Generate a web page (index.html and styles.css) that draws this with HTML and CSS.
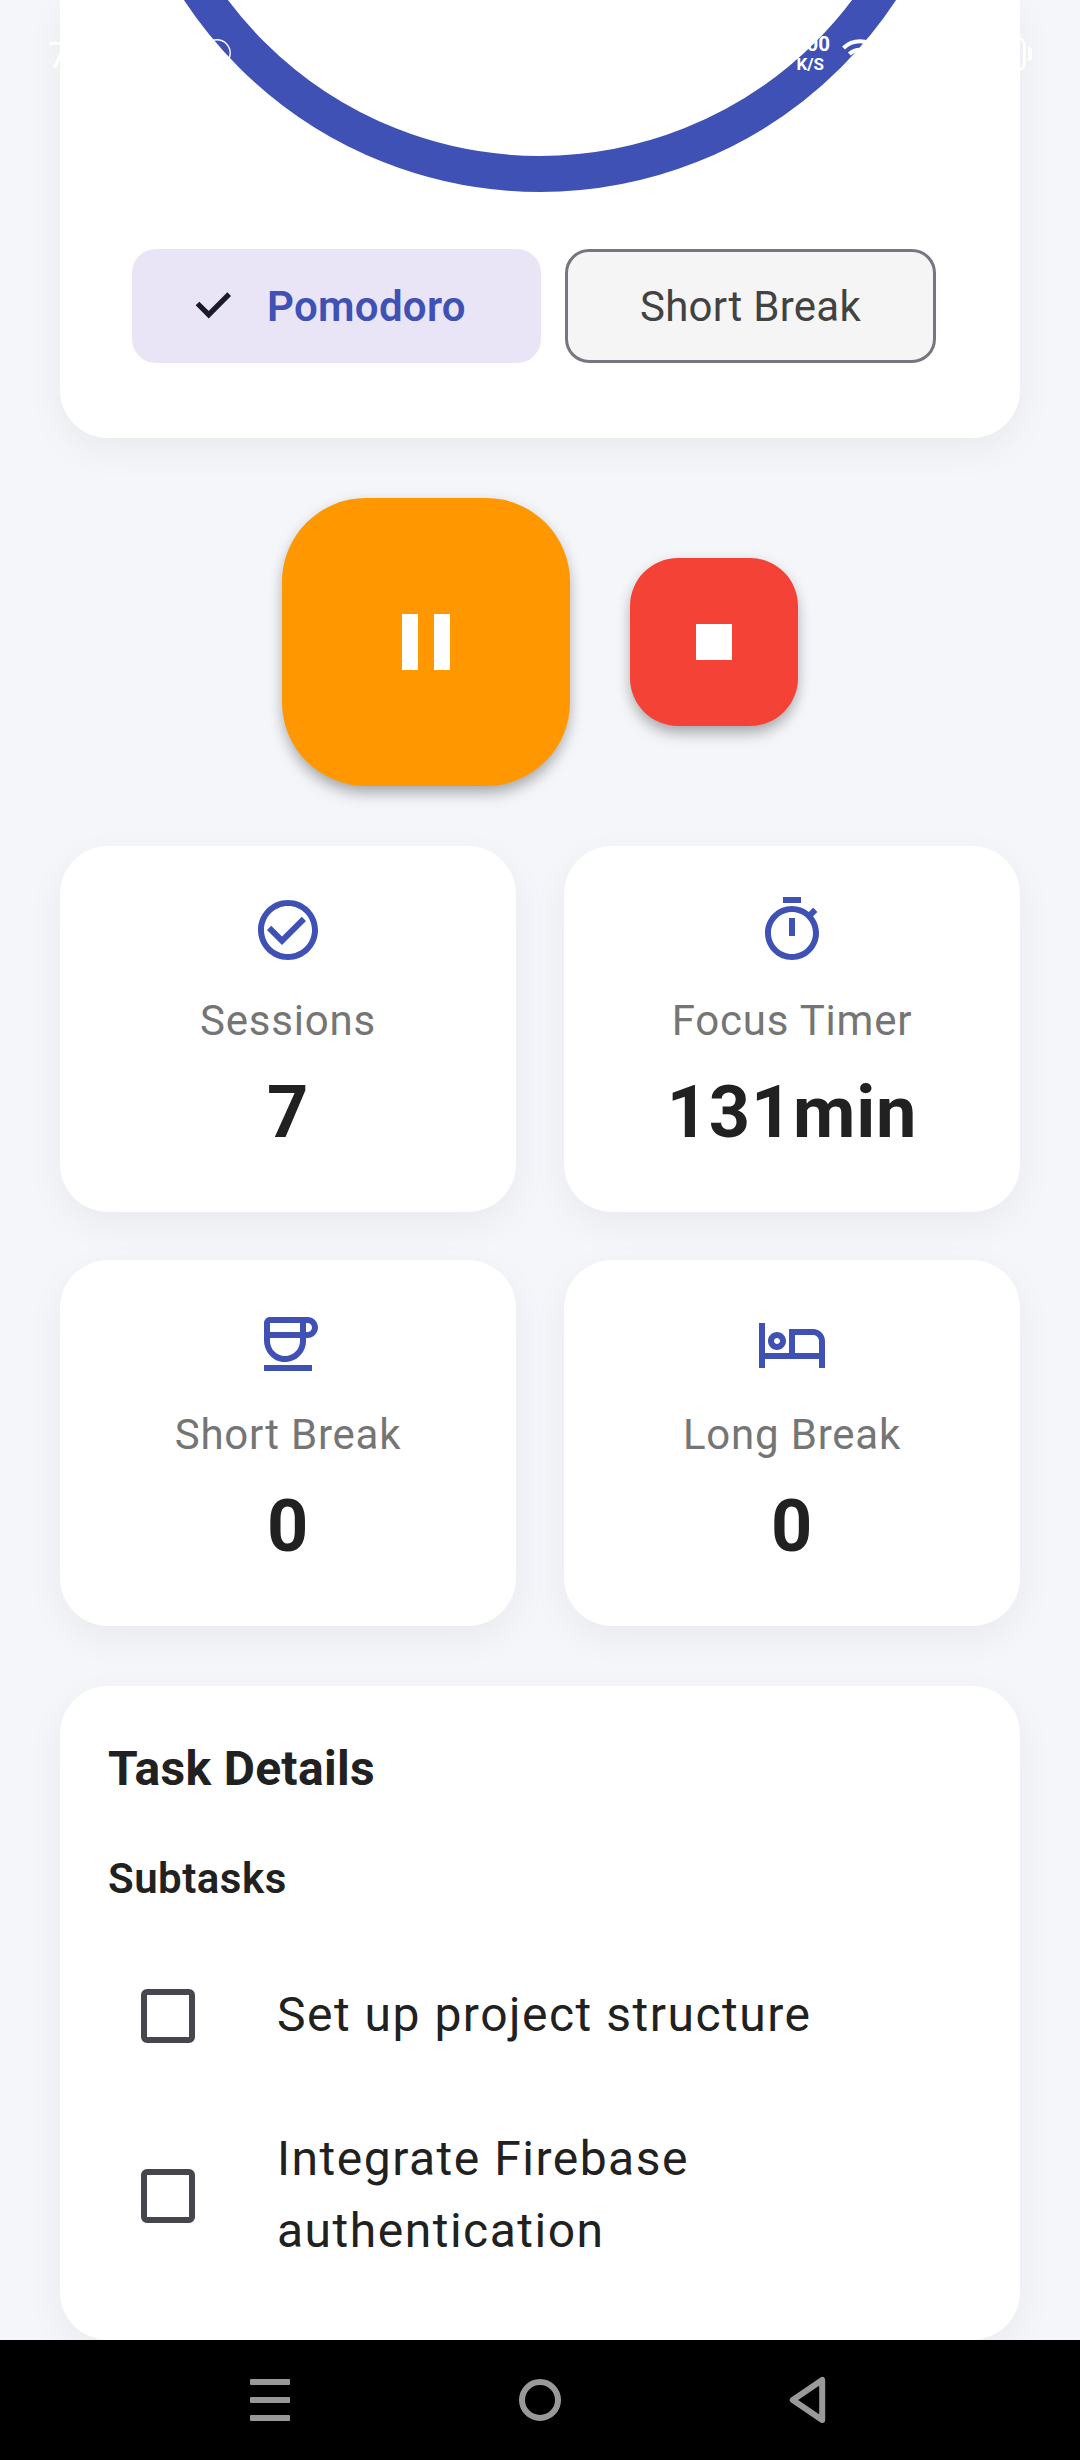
FILE: index.html
```html
<!DOCTYPE html>
<html lang="en">
<head>
<meta charset="utf-8">
<title>Pomodoro</title>
<link rel="stylesheet" href="styles.css">
</head>
<body>
<div class="screen">
  <main class="content">
    <section class="card timer">
      <svg class="ring" viewBox="0 0 852 852"><circle cx="426" cy="426" r="408"/></svg>
      <div class="chips">
        <button class="chip chip-on">
          <svg class="chip-check" viewBox="0 0 36 28"><path d="M2.5 11.5 13.7 22.7 34.2 2.2"/></svg>
          <span>Pomodoro</span>
        </button>
        <button class="chip chip-off"><span>Short Break</span></button>
      </div>
    </section>

    <div class="controls">
      <button class="fab pause" aria-label="Pause"><svg viewBox="0 0 48 56"><path d="M0 0h16v56H0zM32 0h16v56H32z"/></svg></button>
      <button class="fab stop" aria-label="Stop"><svg viewBox="0 0 36 36"><path d="M0 0h36v36H0z"/></svg></button>
    </div>

    <section class="stats">
      <div class="card stat">
        <svg class="icon" viewBox="0 0 24 24"><path d="M16.59 7.58 10 14.17l-3.59-3.58L5 12l5 5 8-8zM12 2C6.48 2 2 6.48 2 12s4.48 10 10 10 10-4.48 10-10S17.52 2 12 2zm0 18c-4.42 0-8-3.58-8-8s3.58-8 8-8 8 3.58 8 8-3.58 8-8 8z"/></svg>
        <div class="label">Sessions</div>
        <div class="value">7</div>
      </div>
      <div class="card stat">
        <svg class="icon" viewBox="0 0 24 24"><path d="M15 1H9v2h6V1zm-4 13h2V8h-2v6zm8.03-6.61 1.42-1.42c-.43-.51-.9-.99-1.41-1.41l-1.42 1.42C16.07 4.74 14.12 4 12 4c-4.97 0-9 4.03-9 9s4.02 9 9 9 9-4.03 9-9c0-2.12-.74-4.07-1.97-5.61zM12 20c-3.87 0-7-3.13-7-7s3.13-7 7-7 7 3.13 7 7-3.13 7-7 7z"/></svg>
        <div class="label">Focus Timer</div>
        <div class="value">131min</div>
      </div>
      <div class="card stat">
        <svg class="icon" viewBox="0 0 24 24"><path d="M18.5 3H6C4.9 3 4 3.9 4 5v5.71c0 3.83 2.95 7.18 6.78 7.29 3.96.12 7.22-3.06 7.22-7v-1h.5c1.93 0 3.5-1.57 3.5-3.5S20.43 3 18.5 3zM16 5v3H6V5h10zm0 5v1c0 2.76-2.24 5-5 5s-5-2.24-5-5v-1h10zM18.5 8H18V5h.5c.83 0 1.5.67 1.5 1.5S19.33 8 18.5 8zM4 19h16v2H4v-2z"/></svg>
        <div class="label">Short Break</div>
        <div class="value">0</div>
      </div>
      <div class="card stat">
        <svg class="icon" viewBox="0 0 24 24"><path d="M7 14c1.66 0 3-1.34 3-3S8.66 8 7 8s-3 1.34-3 3 1.34 3 3 3zm0-4c.55 0 1 .45 1 1s-.45 1-1 1-1-.45-1-1 .45-1 1-1zm12-3h-8v8H3V5H1v15h2v-3h18v3h2v-9c0-2.21-1.79-4-4-4zm2 8h-8V9h6c1.1 0 2 .9 2 2v4z"/></svg>
        <div class="label">Long Break</div>
        <div class="value">0</div>
      </div>
    </section>

    <section class="card details">
      <h2>Task Details</h2>
      <h3>Subtasks</h3>
      <div class="task"><span class="box"></span><span class="task-text">Set up project structure</span></div>
      <div class="task task-tall"><span class="box"></span><span class="task-text">Integrate Firebase authentication</span></div>
    </section>
  </main>

  <header class="statusbar">
    <span class="clock">7</span>
    <svg class="ball" viewBox="0 0 28 28"><circle cx="14" cy="14" r="13.2"/></svg>
    <div class="speed"><span>5.00</span><span class="unit">K/S</span></div>
    <svg class="wifi" viewBox="0 0 36 30"><path d="M1.5 11a23.5 23.5 0 0 1 33 0M7.3 17a15.3 15.3 0 0 1 21.4 0"/></svg>
    <svg class="battery" viewBox="0 0 60 34"><rect x="1.3" y="1.3" width="51" height="31.4" rx="6"/><path d="M56 10q4 0 4 3v8q0 3-4 3z"/></svg>
  </header>

  <nav class="navbar">
    <svg viewBox="0 0 60 60"><path class="solid" d="M11 9h38q1 0 1 1v4q0 1-1 1H11q-1 0-1-1v-4q0-1 1-1zM11 27h38q1 0 1 1v4q0 1-1 1H11q-1 0-1-1v-4q0-1 1-1zM11 45h38q1 0 1 1v4q0 1-1 1H11q-1 0-1-1v-4q0-1 1-1z"/></svg>
    <svg viewBox="0 0 60 60"><circle cx="30" cy="30" r="18"/></svg>
    <svg viewBox="0 0 60 60"><path d="M12.8 30 42.2 10v40z"/></svg>
  </nav>
</div>
</body>
</html>
```
FILE: styles.css
```css
* { box-sizing: border-box; }
body { margin: 0; font-family: Roboto, sans-serif; }
button { font: inherit; border: 0; padding: 0; margin: 0; }
svg { display: block; flex: none; }

.screen {
  position: relative;
  width: 1080px;
  height: 2460px;
  overflow: hidden;
  background: #f4f6fa;
  display: flex;
  flex-direction: column;
}
.content { height: 2340px; flex: none; padding: 0 60px; overflow: hidden; }
.card {
  background: #fff;
  border-radius: 48px;
  box-shadow: 0 12px 37px rgba(0, 0, 0, .05);
}

.timer {
  height: 438px;
  border-radius: 0 0 48px 48px;
  display: flex;
  flex-direction: column;
  justify-content: flex-end;
  align-items: center;
  padding-bottom: 75px;
}
.ring { width: 852px; height: 852px; margin-bottom: 57px; fill: none; stroke: #3f51b5; stroke-width: 36; }
.chips { display: flex; gap: 24px; width: 816px; }
.chip { height: 114px; border-radius: 24px; font-size: 42px; letter-spacing: .3px; display: flex; align-items: center; }
.chip-on { width: 409px; padding-left: 63px; gap: 36px; background: #e9e5f7; color: #3f51b5; font-weight: 600; }
.chip-check { width: 36px; height: 28px; fill: none; stroke: #191a2c; stroke-width: 5.2; }
.chip-off { width: 371px; justify-content: center; background: #f5f5f5; border: 3px solid #777680; color: #424242; }

.controls { display: flex; justify-content: center; align-items: center; gap: 60px; padding: 60px 0; }
.fab { display: flex; align-items: center; justify-content: center; box-shadow: 0 10px 16px -3px rgba(0, 0, 0, .26), 0 3px 14px rgba(0, 0, 0, .12); }
.fab svg { fill: #fff; }
.pause { width: 288px; height: 288px; border-radius: 84px; background: #ff9800; }
.pause svg { width: 48px; height: 56px; }
.stop { width: 168px; height: 168px; border-radius: 48px; background: #f44336; }
.stop svg { width: 36px; height: 36px; }

.stats { display: grid; grid-template-columns: 456px 456px; gap: 48px; }
.stat { height: 366px; padding: 48px; display: flex; flex-direction: column; align-items: center; }
.icon { width: 72px; height: 72px; fill: #3f51b5; }
.label { margin-top: 25px; font-size: 42px; line-height: 60px; letter-spacing: .8px; color: #757575; }
.value { margin-top: 11px; font-size: 72px; line-height: 102px; font-weight: 700; letter-spacing: .8px; color: #212121; }

.details { margin-top: 60px; height: 654px; padding: 47px 48px 0; color: #212121; }
h2, h3 { margin: 0; }
h2 { font-size: 48px; line-height: 72px; font-weight: 700; letter-spacing: .3px; }
h3 { margin-top: 44px; font-size: 42px; line-height: 60px; font-weight: 600; letter-spacing: .5px; }
.task { height: 168px; display: flex; align-items: center; padding-left: 33px; gap: 82px; }
h3 + .task { margin-top: 23px; }
.task-tall { height: 192px; }
.box { width: 54px; height: 54px; flex: none; border: 6px solid #46464f; border-radius: 6px; }
.task-text { font-size: 48px; line-height: 72px; letter-spacing: 1.5px; width: 560px; padding-bottom: 2px; }

/* System bars sit over the scrolled page */
.statusbar { position: absolute; inset: 0 0 auto 0; height: 108px; color: #fff; }
.statusbar > * { position: absolute; }
.clock { left: 48px; top: 35px; font-size: 36px; line-height: 42px; }
.ball { left: 203px; top: 39px; width: 28px; height: 28px; fill: none; stroke: #fff; stroke-width: 1.4; }
.speed { right: 250px; top: 34px; display: flex; flex-direction: column; align-items: flex-end; font-size: 20.5px; line-height: 20px; font-weight: 700; }
.unit { font-size: 17px; padding-right: 6px; }
.wifi { left: 842px; top: 37px; width: 36px; height: 30px; fill: none; stroke: #fff; stroke-width: 4; }
.battery { left: 972px; top: 37px; width: 60px; height: 34px; fill: none; stroke: #fff; stroke-width: 2.6; }
.battery path { fill: #fff; stroke: none; }

.navbar { height: 120px; background: #000; display: flex; justify-content: center; align-items: center; gap: 210px; }
.navbar svg { width: 60px; height: 60px; fill: none; stroke: #999; stroke-width: 6; stroke-linejoin: round; }
.navbar .solid { fill: #999; stroke: none; }
```
